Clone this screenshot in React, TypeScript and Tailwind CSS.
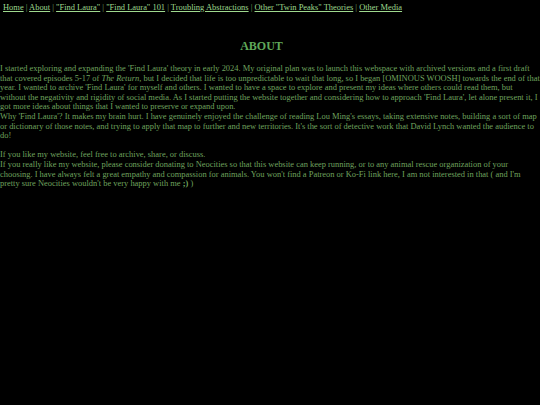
import React from 'react';

const links = [
  'Home',
  'About',
  '"Find Laura"',
  '"Find Laura" 101',
  'Troubling Abstractions',
  'Other "Twin Peaks" Theories',
  'Other Media',
];

const App: React.FC = () => {
  return (
    <div className="min-h-[405px] bg-black text-[#6fa35f] text-[8.45px] leading-[9.6px] font-['Liberation_Serif',serif]">
      <nav className="pl-[3px] pt-[3px]">
        {links.map((l, i) => (
          <span key={l}>
            {i > 0 && <span> | </span>}
            <a href="#" className="text-[#9ed98e] underline">{l}</a>
          </span>
        ))}
      </nav>
      <h1 className="text-center font-bold text-[12px] leading-[14px] text-[#5fa85a] mt-[26.5px] mb-[11px] pr-[17px]">ABOUT</h1>
      <p>
        I started exploring and expanding the 'Find Laura' theory in early 2024. My original plan was to launch this webspace with archived versions and a first draft that covered episodes 5-17 of <i>The Return</i>, but I decided that life is too unpredictable to wait that long, so I began [OMINOUS WOOSH] towards the end of that year. I wanted to archive 'Find Laura' for myself and others. I wanted to have a space to explore and present my ideas where others could read them, but without the negativity and rigidity of social media. As I started putting the website together and considering how to approach 'Find Laura', let alone present it, I got more ideas about things that I wanted to preserve or expand upon.
        <br />
        Why 'Find Laura'? It makes my brain hurt. I have genuinely enjoyed the challenge of reading Lou Ming's essays, taking extensive notes, building a sort of map or dictionary of those notes, and trying to apply that map to further and new territories. It's the sort of detective work that David Lynch wanted the audience to do!
        <br />
        <br />
        If you like my website, feel free to archive, share, or discuss.
        <br />
        If you really like my website, please consider donating to Neocities so that this website can keep running, or to any animal rescue organization of your choosing. I have always felt a great empathy and compassion for animals. You won't find a Patreon or Ko-Fi link here, I am not interested in that ( and I'm pretty sure Neocities wouldn't be very happy with me <b>;)</b> )
      </p>
    </div>
  );
};

export default App;
